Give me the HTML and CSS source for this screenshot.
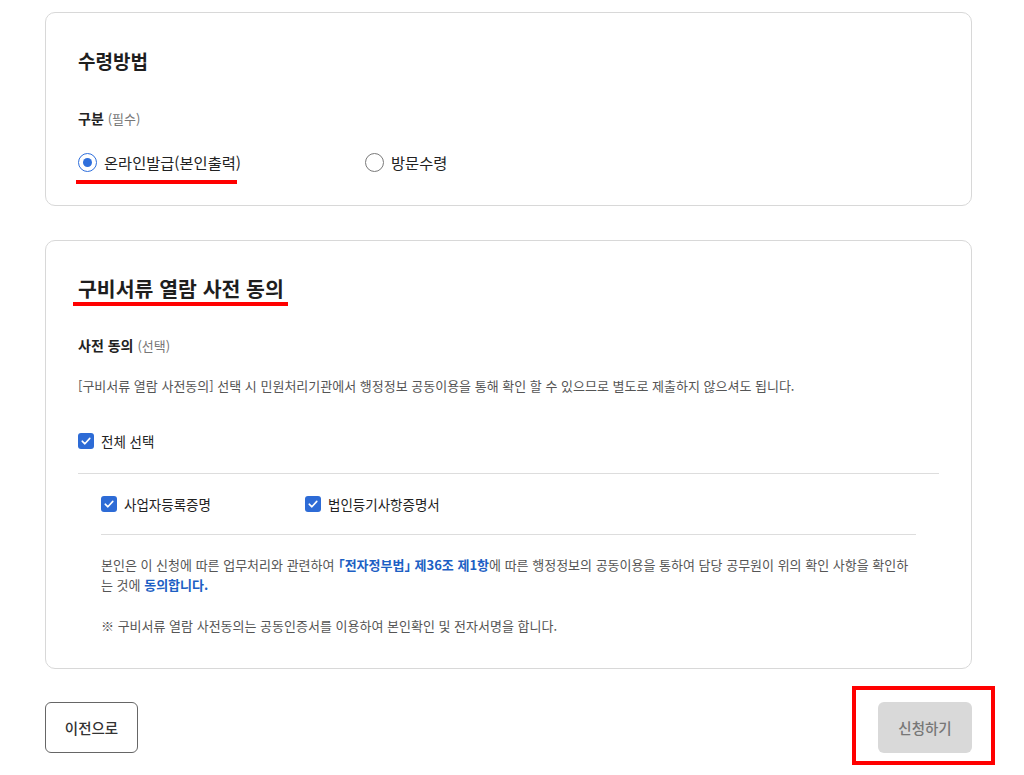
FILE: index.html
```html
<!DOCTYPE html>
<html lang="ko">
<head>
<meta charset="utf-8">
<title>수령방법</title>
<link rel="stylesheet" href="styles.css">
</head>
<body>
<main class="page">
  <section class="card card-receive">
    <h2 class="card-title t1">수령방법</h2>
    <div class="field-label">구분 <span class="hint">(필수)</span></div>
    <div class="radio-row">
      <label class="radio-item marked">
        <span class="radio on"></span>
        <span class="radio-text">온라인발급(본인출력)</span>
      </label>
      <label class="radio-item">
        <span class="radio"></span>
        <span class="radio-text">방문수령</span>
      </label>
    </div>
  </section>

  <section class="card card-consent">
    <h2 class="card-title t2"><span class="title-mark">구비서류 열람 사전 동의</span></h2>
    <div class="field-label">사전 동의 <span class="hint">(선택)</span></div>
    <p class="desc">[구비서류 열람 사전동의] 선택 시 민원처리기관에서 행정정보 공동이용을 통해 확인 할 수 있으므로 별도로 제출하지 않으셔도 됩니다.</p>

    <div class="all-row">
      <label class="check-item">
        <span class="check"><svg viewBox="0 0 16 16" width="16" height="16"><path d="M4.2 8.2 L6.9 10.8 L11.8 5.4" fill="none" stroke="#fff" stroke-width="1.6" stroke-linecap="round" stroke-linejoin="round"/></svg></span>
        <span class="check-text">전체 선택</span>
      </label>
    </div>

    <div class="sub">
      <div class="sub-row">
        <label class="check-item w1">
          <span class="check"><svg viewBox="0 0 16 16" width="16" height="16"><path d="M4.2 8.2 L6.9 10.8 L11.8 5.4" fill="none" stroke="#fff" stroke-width="1.6" stroke-linecap="round" stroke-linejoin="round"/></svg></span>
          <span class="check-text">사업자등록증명</span>
        </label>
        <label class="check-item">
          <span class="check"><svg viewBox="0 0 16 16" width="16" height="16"><path d="M4.2 8.2 L6.9 10.8 L11.8 5.4" fill="none" stroke="#fff" stroke-width="1.6" stroke-linecap="round" stroke-linejoin="round"/></svg></span>
          <span class="check-text">법인등기사항증명서</span>
        </label>
      </div>
      <p class="agree">본인은 이 신청에 따른 업무처리와 관련하여 <strong class="law">「전자정부법」 제36조 제1항</strong>에 따른 행정정보의 공동이용을 통하여 담당 공무원이 위의 확인 사항을 확인하는 것에 <strong>동의합니다.</strong></p>
      <p class="note">※ 구비서류 열람 사전동의는 공동인증서를 이용하여 본인확인 및 전자서명을 합니다.</p>
    </div>
  </section>

  <div class="actions">
    <button class="btn btn-prev" type="button">이전으로</button>
    <div class="submit-wrap">
      <button class="btn btn-submit" type="button" disabled>신청하기</button>
      <span class="red-box"></span>
    </div>
  </div>
</main>
</body>
</html>
```

FILE: styles.css
```css
* { box-sizing: border-box; }
html, body { margin: 0; padding: 0; background: #fff; }
body {
  font-family: "Noto Sans CJK KR", "Noto Sans", sans-serif;
  color: #222;
}
.page {
  width: 927px;
  margin-left: 45px;
  padding-top: 12px;
  padding-bottom: 23px;
  display: flex;
  flex-direction: column;
  gap: 34px;
}
.card {
  border: 1px solid #d8d8d8;
  border-radius: 10px;
}
.card-receive { padding: 35px 32px 33px 32px; }
.card-consent { padding: 34px 32px 32px 32px; }
.card-title {
  margin: 0;
  font-weight: 700;
  line-height: 26px;
  color: #1e1e1e;
}
.t1 { font-size: 19px; }
.t2 { font-size: 20.5px; }
.title-mark { position: relative; display: inline-block; }
.title-mark::after {
  content: "";
  position: absolute;
  left: -5px;
  right: -4px;
  bottom: -5px;
  height: 4px;
  background: #f00;
}
.field-label {
  margin-top: 34px;
  font-size: 14px;
  font-weight: 700;
  line-height: 20px;
  color: #222;
}
.hint { font-size: 13px; font-weight: 400; color: #777; }
.radio-row {
  margin-top: 23px;
  display: flex;
  align-items: center;
}
.radio-item {
  display: flex;
  align-items: center;
  gap: 7px;
  height: 20px;
  position: relative;
}
.radio-item:first-child { width: 287px; }
.radio-item.marked::after {
  content: "";
  position: absolute;
  left: -2px;
  width: 161px;
  bottom: -12px;
  height: 4px;
  background: #f00;
}
.radio {
  width: 19px;
  height: 19px;
  border-radius: 50%;
  border: 1px solid #7a7a7a;
  background: #fff;
  flex: none;
  display: flex;
  align-items: center;
  justify-content: center;
}
.radio.on { border: 1.5px solid #2f6fdc; }
.radio.on::before {
  content: "";
  width: 9px;
  height: 9px;
  border-radius: 50%;
  background: #2f6fdc;
}
.radio-text { font-size: 15.3px; color: #222; line-height: 20px; }

.desc {
  margin: 20px 0 0;
  font-size: 13px;
  line-height: 20px;
  color: #555;
}
.all-row {
  margin-top: 35px;
  padding-bottom: 22px;
  border-bottom: 1px solid #ddd;
}
.check-item {
  display: flex;
  align-items: center;
  gap: 7px;
  height: 20px;
}
.check {
  width: 16px;
  height: 16px;
  border-radius: 3px;
  background: #2d6bd6;
  flex: none;
  display: flex;
}
.check-text { font-size: 13.5px; color: #222; line-height: 20px; }
.sub { margin: 0 23px; }
.sub-row {
  display: flex;
  padding: 20px 0 20px;
  border-bottom: 1px solid #ddd;
}
.check-item.w1 { width: 204px; }
.agree {
  margin: 20px 0 0;
  font-size: 13px;
  line-height: 20px;
  color: #555;
}
.agree strong { color: #1d5fc4; font-weight: 700; }
.agree .law { font-feature-settings: "halt" 1; }
.note {
  margin: 21px 0 0;
  font-size: 13px;
  line-height: 20px;
  color: #555;
}
.actions {
  margin-top: -1px;
  display: flex;
  justify-content: space-between;
  align-items: flex-start;
}
.btn {
  height: 51px;
  border-radius: 6px;
  font-family: inherit;
  font-size: 14.5px;
  font-weight: 500;
  padding: 0;
}
.btn-prev {
  width: 93px;
  background: #fff;
  border: 1px solid #666;
  color: #333;
}
.btn-submit {
  width: 94px;
  background: #d9d9d9;
  border: none;
  color: #777;
}
.submit-wrap { position: relative; display: flex; }
.red-box {
  position: absolute;
  left: -26px;
  top: -16px;
  width: 143px;
  height: 79px;
  border: 4px solid #f00;
}
```
